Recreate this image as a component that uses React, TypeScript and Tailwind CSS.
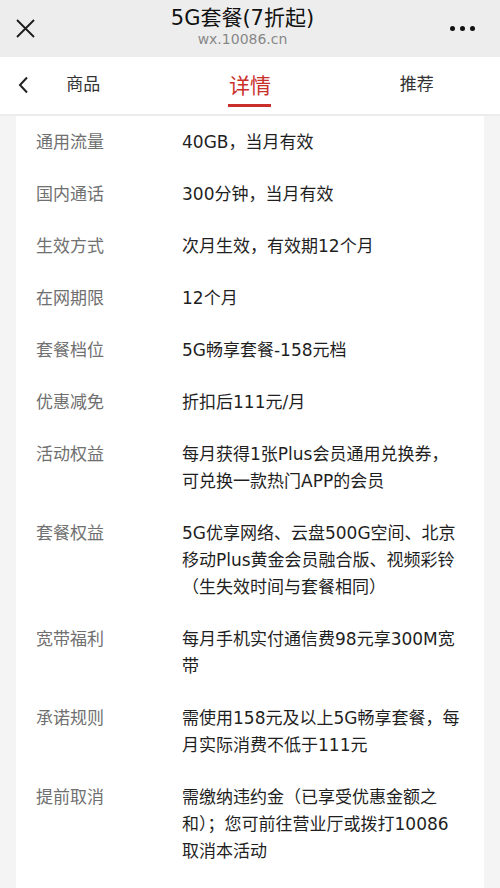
import React from "react";

const rows = [
  { label: "通用流量", value: "40GB，当月有效" },
  { label: "国内通话", value: "300分钟，当月有效" },
  { label: "生效方式", value: "次月生效，有效期12个月" },
  { label: "在网期限", value: "12个月" },
  { label: "套餐档位", value: "5G畅享套餐-158元档" },
  { label: "优惠减免", value: "折扣后111元/月" },
  { label: "活动权益", value: "每月获得1张Plus会员通用兑换券，可兑换一款热门APP的会员" },
  { label: "套餐权益", value: "5G优享网络、云盘500G空间、北京移动Plus黄金会员融合版、视频彩铃（生失效时间与套餐相同）" },
  { label: "宽带福利", value: "每月手机实付通信费98元享300M宽带" },
  { label: "承诺规则", value: "需使用158元及以上5G畅享套餐，每月实际消费不低于111元" },
  { label: "提前取消", value: "需缴纳违约金（已享受优惠金额之和）；您可前往营业厅或拨打10086取消本活动" },
];

export default function App() {
  return (
    <div
      className="w-[500px] h-[888px] overflow-hidden bg-[#f4f4f4]"
      style={{ fontFamily: '"DejaVu Sans", "Noto Sans CJK SC", sans-serif' }}
    >
      {/* top bar */}
      <div className="h-[57px] bg-[#ededed] flex items-center px-4">
        <svg width="19" height="19" viewBox="0 0 19 19" className="shrink-0">
          <path d="M1 1L18 18M18 1L1 18" stroke="#1a1a1a" strokeWidth="1.8" />
        </svg>
        <div className="flex-1 flex flex-col items-center">
          <div className="text-[21px] leading-[24px] text-[#111] mt-[-3px]">5G套餐(7折起)</div>
          <div className="text-[14px] leading-[18px] text-[#888]">wx.10086.cn</div>
        </div>
        <div className="flex gap-[5px] items-center shrink-0 pr-[9px]">
          <span className="w-[5px] h-[5px] rounded-full bg-[#111]" />
          <span className="w-[5px] h-[5px] rounded-full bg-[#111]" />
          <span className="w-[5px] h-[5px] rounded-full bg-[#111]" />
        </div>
      </div>

      {/* tabs */}
      <div className="relative h-[59px] bg-white grid grid-cols-3 border-b-[2px] border-[#ececec]">
        <svg width="11" height="18" viewBox="0 0 11 18" className="absolute left-[18px] top-[19px]">
          <path d="M9 1.5L2 9L9 16.5" stroke="#222" strokeWidth="2" fill="none" />
        </svg>
        <div className="flex items-center justify-center text-[17px] text-[#333] pb-[2px]">商品</div>
        <div className="flex flex-col items-center justify-center">
          <div className="text-[21px] leading-[26px] text-[#c9302c] mt-[8px]">详情</div>
          <div className="w-[43px] h-[3px] bg-[#c9302c] mt-[5px]" />
        </div>
        <div className="flex items-center justify-center text-[17px] text-[#333] pb-[2px]">推荐</div>
      </div>

      {/* card */}
      <div className="mx-4 bg-white pt-[13px] pb-8 px-5 flex flex-col gap-[25px]">
        {rows.map((r) => (
          <div key={r.label} className="flex text-[17px] leading-[27px]">
            <div className="w-[146px] shrink-0 text-[#707070]">{r.label}</div>
            <div className="w-[280px] text-[#1f1f1f]">{r.value}</div>
          </div>
        ))}
      </div>
    </div>
  );
}
